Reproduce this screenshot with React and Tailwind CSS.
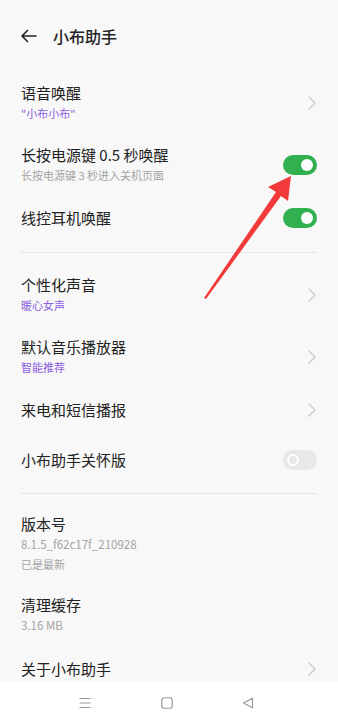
import React from 'react';

const FONT = { fontFamily: '"Noto Sans CJK SC", "Noto Sans", sans-serif' };

const Chevron = () => (
  <svg width="10" height="16" viewBox="0 0 10 16" fill="none">
    <path d="M2 2l6 6-6 6" stroke="#cfcfcf" strokeWidth="1.6" strokeLinecap="round" strokeLinejoin="round" />
  </svg>
);

const Toggle = ({ on }) =>
  on ? (
    <div className="w-[34px] h-[20px] rounded-full bg-[#31b04f] flex items-center justify-end pr-[4px]">
      <div className="w-[12px] h-[12px] rounded-full bg-white" />
    </div>
  ) : (
    <div className="w-[34px] h-[20px] rounded-full bg-[#e8e8e8] flex items-center pl-[4px]">
      <div className="w-[12px] h-[12px] rounded-full border-[2px] border-white" />
    </div>
  );

const Row = ({ h, title, sub, subColor = 'text-[#8a5fe0]', right }) => (
  <div className={`flex items-center justify-between px-[21px] ${h}`}>
    <div className="flex flex-col">
      <div className="text-[15px] leading-[20px] text-[#222]">{title}</div>
      {sub && <div className={`text-[11px] leading-[20px] ${subColor}`}>{sub}</div>}
    </div>
    {right}
  </div>
);

const Divider = ({ h }) => (
  <div className={`flex items-center px-[21px] ${h}`}>
    <div className="w-full h-px bg-[#e6e6e6]" />
  </div>
);

export default function App() {
  return (
    <div className="relative w-[338px] h-[724px] bg-[#f8f8f8] flex flex-col overflow-hidden" style={FONT}>
      <div className="h-[682px] overflow-hidden">
        {/* 标题栏 */}
        <div className="h-[72px] flex items-center px-[20px]">
          <svg width="17" height="14" viewBox="0 0 17 14" fill="none">
            <path d="M16 7H2M7.5 1.5L2 7l5.5 5.5" stroke="#222" strokeWidth="1.6" strokeLinecap="round" strokeLinejoin="round" />
          </svg>
          <span className="ml-[16px] text-[16px] text-[#222] font-medium">小布助手</span>
        </div>

        <Row h="h-[62px]" title="语音唤醒" sub={'"小布小布"'} right={<Chevron />} />
        <Row
          h="h-[62px]"
          title="长按电源键 0.5 秒唤醒"
          sub="长按电源键 3 秒进入关机页面"
          subColor="text-[#a3a3a3]"
          right={<Toggle on />}
        />
        <Row h="h-[44px]" title="线控耳机唤醒" right={<Toggle on />} />
        <Divider h="h-[24px]" />
        <Row h="h-[62px]" title="个性化声音" sub="暖心女声" right={<Chevron />} />
        <Row h="h-[62px]" title="默认音乐播放器" sub="智能推荐" right={<Chevron />} />
        <Row h="h-[44px]" title="来电和短信播报" right={<Chevron />} />
        <Row h="h-[56px]" title="小布助手关怀版" right={<Toggle />} />
        <Divider h="h-[10px]" />

        <div className="px-[21px] pt-[16px] pb-[6px]">
          <div className="text-[15px] leading-[20px] text-[#222]">版本号</div>
          <div className="text-[11.5px] leading-[20px] text-[#a3a3a3]">8.1.5_f62c17f_210928</div>
          <div className="text-[11px] leading-[20px] text-[#a3a3a3]">已是最新</div>
        </div>
        <div className="px-[21px] pt-[15px] pb-[12px]">
          <div className="text-[15px] leading-[20px] text-[#222]">清理缓存</div>
          <div className="text-[11.5px] leading-[20px] text-[#a3a3a3]">3.16 MB</div>
        </div>
        <Row h="h-[44px]" title="关于小布助手" right={<Chevron />} />
      </div>

      {/* 底部导航 */}
      <div className="h-[42px] bg-white flex items-center">
        <div className="w-[85px]" />
        <div className="flex items-center justify-between w-[175px] -ml-[6px]">
          <svg width="12" height="12" viewBox="0 0 12 12" fill="none">
            <path d="M0.5 1.5h11M0.5 6h11M0.5 10.5h11" stroke="#9a9a9a" strokeWidth="1.1" />
          </svg>
          <svg width="12" height="12" viewBox="0 0 12 12" fill="none">
            <rect x="0.75" y="0.75" width="10.5" height="10.5" rx="2.5" stroke="#9a9a9a" strokeWidth="1.2" />
          </svg>
          <svg width="12" height="12" viewBox="0 0 12 12" fill="none">
            <path d="M10.5 1.2v9.6L1.5 6z" stroke="#9a9a9a" strokeWidth="1.2" strokeLinejoin="round" />
          </svg>
        </div>
      </div>

      {/* 红色箭头标注 */}
      <svg className="absolute left-0 top-0 pointer-events-none" width="338" height="724" viewBox="0 0 338 724">
        <path d="M204 298 L276 192 L268 187 L291 176 L288 201 L281 196 L206 299 Z" fill="#f23a3a" />
      </svg>
    </div>
  );
}
